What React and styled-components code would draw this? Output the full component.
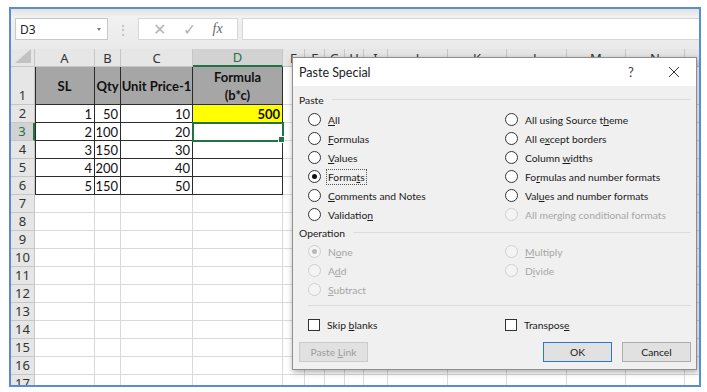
import React from "react";
import styled, { createGlobalStyle } from "styled-components";

const GlobalStyle = createGlobalStyle`
  body {
    margin: 0;
    background: #ffffff;
    font-family: "Lato", "Open Sans", sans-serif;
  }
`;

const colWidths = [24, 60, 26, 72, 90, 22, 20, 20, 19, 24, 60, 59, 60, 59, 59, 40];
const colLetters = ["A", "B", "C", "D", "E", "F", "G", "H", "I", "J", "K", "L", "M", "N", "O"];

const tableRows = [
  ["SL", "Qty", "Unit Price-1", "Formula\n(b*c)"],
  ["1", "50", "10", "500"],
  ["2", "100", "20", ""],
  ["3", "150", "30", ""],
  ["4", "200", "40", ""],
  ["5", "150", "50", ""],
];

const Frame = styled.div`
  position: relative;
  margin: 7px 0 0 9px;
  width: 688px;
  height: 376px;
  border: 2px solid #5b8bd4;
  overflow: hidden;
  background: #ffffff;
`;

const Toolbar = styled.div`
  height: 40px;
  display: flex;
  align-items: flex-start;
  padding: 9px 0 0 4px;
  box-sizing: border-box;
  background: linear-gradient(#e2e2e2, #f1f1f1 20%, #eaeaea);
`;

const NameBox = styled.div`
  width: 93px;
  height: 22px;
  box-sizing: border-box;
  background: #fff;
  border: 1px solid #c8c8c8;
  display: flex;
  align-items: center;
  justify-content: space-between;
  padding: 0 6px 0 4px;
  font-family: "Noto Sans", sans-serif;
  font-size: 12px;
  color: #222;
`;

const Caret = styled.span`
  width: 0;
  height: 0;
  border-left: 2.5px solid transparent;
  border-right: 2.5px solid transparent;
  border-top: 3px solid #777;
`;

const Grip = styled.div`
  width: 30px;
  height: 22px;
  display: flex;
  align-items: center;
  justify-content: center;
  color: #b0b0b0;
  font-size: 12px;
`;

const FxBox = styled.div`
  width: 100px;
  height: 22px;
  box-sizing: border-box;
  background: #fff;
  border: 1px solid #d6d6d6;
  display: flex;
  align-items: center;
  justify-content: space-around;
  padding: 0 6px;
  color: #b4b4b4;
`;

const Fx = styled.span`
  font-family: "Liberation Serif", serif;
  font-style: italic;
  font-size: 14px;
  color: #666;
`;

const FormulaInput = styled.div`
  flex: 1;
  height: 22px;
  margin-left: 4px;
  box-sizing: border-box;
  background: #fff;
  border: 1px solid #d6d6d6;
  border-right: none;
`;

const Sheet = styled.div`
  display: grid;
  grid-template-columns: ${colWidths.map((w) => w + "px").join(" ")};
  grid-template-rows: 18px 38px;
  grid-auto-rows: 18px;
  font-family: "Lato", "Open Sans", sans-serif;
  font-size: 13px;
  color: #111;
  background: #eaeaea;
`;

const Corner = styled.div`
  background: #e6e6e6;
  border-right: 1px solid #c6c6c6;
  border-bottom: 1px solid #c6c6c6;
  position: relative;
  &::after {
    content: "";
    position: absolute;
    right: 3px;
    bottom: 3px;
    border-left: 16px solid transparent;
    border-bottom: 14px solid #c2c2c2;
  }
`;

const ColHead = styled.div`
  background: ${(p) => (p.$active ? "#d2d2d2" : "#e6e6e6")};
  color: ${(p) => (p.$active ? "#217346" : "#333")};
  border-right: 1px solid #c6c6c6;
  border-bottom: ${(p) => (p.$active ? "2px solid #217346" : "1px solid #c6c6c6")};
  display: flex;
  align-items: center;
  justify-content: center;
  font-family: "Noto Sans", sans-serif;
  font-size: 13px;
  overflow: hidden;
`;

const RowHead = styled.div`
  background: ${(p) => (p.$active ? "#d2d2d2" : "#e6e6e6")};
  color: ${(p) => (p.$active ? "#217346" : "#333")};
  border-right: ${(p) => (p.$active ? "2px solid #217346" : "1px solid #c6c6c6")};
  border-bottom: 1px solid #c6c6c6;
  display: flex;
  align-items: ${(p) => (p.$tall ? "flex-end" : "center")};
  justify-content: center;
  font-family: "Noto Sans", sans-serif;
  font-size: 13px;
  line-height: 17px;
`;

const Cell = styled.div`
  position: relative;
  background: ${(p) => p.$bg || "#ffffff"};
  border-right: 1px solid ${(p) => (p.$table ? "#2b2b2b" : "#dadada")};
  border-bottom: 1px solid ${(p) => (p.$table ? "#2b2b2b" : "#dadada")};
  box-shadow: ${(p) => (p.$left ? "inset 1px 0 0 #2b2b2b" : "none")};
  display: flex;
  align-items: center;
  justify-content: ${(p) => (p.$center ? "center" : "flex-end")};
  text-align: center;
  padding: 0 2px;
  font-weight: ${(p) => (p.$bold ? 700 : 400)};
  white-space: pre;
  line-height: 18px;
  ${(p) =>
    p.$selected &&
    `
    outline: 2px solid #217346;
    outline-offset: -1px;
    z-index: 1;
    &::after {
      content: "";
      position: absolute;
      right: -3px;
      bottom: -3px;
      width: 5px;
      height: 5px;
      background: #217346;
      border: 1px solid #fff;
    }
  `}
`;

const Dialog = styled.div`
  position: absolute;
  left: 281px;
  top: 48px;
  width: 405px;
  height: 313px;
  box-sizing: border-box;
  border: 1px solid #8f8f8f;
  background: #f0f0f0;
  box-shadow: 1px 2px 6px rgba(0, 0, 0, 0.35);
  font-family: "Lato", "Open Sans", sans-serif;
  font-size: 10.3px;
  color: #1a1a1a;
  display: flex;
  flex-direction: column;
`;

const TitleBar = styled.div`
  height: 28px;
  background: #fff;
  display: flex;
  align-items: center;
  padding: 0 0 0 6px;
  font-size: 12.5px;
  color: #222;
`;

const Title = styled.div`
  flex: 1;
`;

const TitleButton = styled.div`
  width: ${(p) => p.$w}px;
  margin-left: ${(p) => p.$ml || 0}px;
  display: flex;
  justify-content: center;
  color: #444;
  font-size: 13px;
`;

const Body = styled.div`
  flex: 1;
  padding: 5px 5px 0 6px;
  display: flex;
  flex-direction: column;
`;

const GroupLabel = styled.div`
  display: flex;
  align-items: center;
  height: 18px;
  color: #1a1a1a;
  &::after {
    content: "";
    flex: 1;
    height: 1px;
    background: #dcdcdc;
    margin-left: 8px;
    margin-top: -2px;
  }
`;

const Options = styled.div`
  display: grid;
  grid-template-columns: 197px 1fr;
  grid-auto-rows: 19px;
  padding-left: 9px;
  margin-top: ${(p) => p.$mt || 0}px;
`;

const Option = styled.div`
  display: flex;
  align-items: center;
  gap: 5px;
  color: ${(p) => (p.$disabled ? "#a6a6a6" : "#1a1a1a")};
`;

const Radio = styled.span`
  width: 13px;
  height: 13px;
  box-sizing: border-box;
  border-radius: 50%;
  border: 1px solid ${(p) => (p.$disabled ? "#cfcfcf" : "#333")};
  background: ${(p) => (p.$disabled ? "#f4f4f4" : "#fff")};
  display: flex;
  align-items: center;
  justify-content: center;
  flex-shrink: 0;
  &::after {
    content: "";
    display: ${(p) => (p.$checked ? "block" : "none")};
    width: 5px;
    height: 5px;
    border-radius: 50%;
    background: ${(p) => (p.$disabled ? "#b8b8b8" : "#111")};
  }
`;

const Check = styled.span`
  width: 12px;
  height: 12px;
  box-sizing: border-box;
  border: 1px solid #333;
  background: #fff;
  flex-shrink: 0;
`;

const Label = styled.span`
  padding: 0 1px;
  border: 1px ${(p) => (p.$focus ? "dotted #555" : "solid transparent")};
  line-height: 14px;
`;

const Divider = styled.div`
  height: 1px;
  background: #dcdcdc;
  margin: 6px 0 0 9px;
`;

const Footer = styled.div`
  display: flex;
  align-items: center;
  margin-top: 8px;
`;

const Button = styled.div`
  width: ${(p) => p.$w || 69}px;
  height: 20px;
  box-sizing: border-box;
  display: flex;
  align-items: center;
  justify-content: center;
  background: #e1e1e1;
  border: 1px solid ${(p) => (p.$primary ? "#2a78d4" : p.$disabled ? "#cccccc" : "#adadad")};
  color: ${(p) => (p.$disabled ? "#9c9c9c" : "#1a1a1a")};
  margin-left: ${(p) => p.$ml || 0}px;
`;

const Spacer = styled.div`
  flex: 1;
`;

const u = (text, i) => (
  <span>
    {text.slice(0, i)}
    <u>{text[i]}</u>
    {text.slice(i + 1)}
  </span>
);

const pasteOptions = [
  { t: "All", k: 0 },
  { t: "All using Source theme", k: 18 },
  { t: "Formulas", k: 0 },
  { t: "All except borders", k: 5 },
  { t: "Values", k: 0 },
  { t: "Column widths", k: 7 },
  { t: "Formats", k: 5, checked: true, focus: true },
  { t: "Formulas and number formats", k: 2 },
  { t: "Comments and Notes", k: 0 },
  { t: "Values and number formats", k: 3 },
  { t: "Validation", k: 9 },
  { t: "All merging conditional formats", k: -1, disabled: true },
];

const opOptions = [
  { t: "None", k: 1, checked: true },
  { t: "Multiply", k: 0 },
  { t: "Add", k: 1 },
  { t: "Divide", k: 1 },
  { t: "Subtract", k: 0 },
];

const CloseIcon = () => (
  <svg width="12" height="12" viewBox="0 0 12 12">
    <path d="M1 1 L11 11 M11 1 L1 11" stroke="#333" strokeWidth="1" fill="none" />
  </svg>
);

function SheetGrid() {
  const cells = [];
  cells.push(<Corner key="corner" />);
  colLetters.forEach((l) => cells.push(<ColHead key={"h" + l} $active={l === "D"}>{l}</ColHead>));
  for (let r = 1; r <= 17; r++) {
    cells.push(
      <RowHead key={"r" + r} $active={r === 3} $tall={r === 1}>
        {r}
      </RowHead>
    );
    colLetters.forEach((l, c) => {
      const inTable = r <= 6 && c <= 3;
      const value = inTable ? tableRows[r - 1][c] : "";
      cells.push(
        <Cell
          key={l + r}
          $table={inTable}
          $left={inTable && c === 0}
          $bg={r === 1 && inTable ? "#a6a6a6" : r === 2 && c === 3 ? "#ffff00" : null}
          $bold={r === 1 || (r === 2 && c === 3)}
          $center={r === 1}
          $selected={r === 3 && c === 3}
        >
          {value}
        </Cell>
      );
    });
  }
  return <Sheet>{cells}</Sheet>;
}

function PasteSpecial() {
  return (
    <Dialog>
      <TitleBar>
        <Title>Paste Special</Title>
        <TitleButton $w={24}>?</TitleButton>
        <TitleButton $w={44} $ml={9}>
          <CloseIcon />
        </TitleButton>
      </TitleBar>
      <Body>
        <GroupLabel>Paste</GroupLabel>
        <Options $mt={1}>
          {pasteOptions.map((o) => (
            <Option key={o.t} $disabled={o.disabled}>
              <Radio $checked={o.checked} $disabled={o.disabled} />
              <Label $focus={o.focus}>{o.k >= 0 ? u(o.t, o.k) : o.t}</Label>
            </Option>
          ))}
        </Options>
        <GroupLabel>Operation</GroupLabel>
        <Options>
          {opOptions.map((o) => (
            <Option key={o.t} $disabled>
              <Radio $checked={o.checked} $disabled />
              <Label>{u(o.t, o.k)}</Label>
            </Option>
          ))}
        </Options>
        <Divider />
        <Options $mt={9}>
          <Option>
            <Check />
            <Label>{u("Skip blanks", 5)}</Label>
          </Option>
          <Option>
            <Check />
            <Label>{u("Transpose", 8)}</Label>
          </Option>
        </Options>
        <Footer>
          <Button $disabled>{u("Paste Link", 6)}</Button>
          <Spacer />
          <Button $primary>OK</Button>
          <Button $ml={10}>Cancel</Button>
        </Footer>
      </Body>
    </Dialog>
  );
}

export default function App() {
  return (
    <>
      <GlobalStyle />
      <Frame>
        <Toolbar>
          <NameBox>
            D3
            <Caret />
          </NameBox>
          <Grip>⋮</Grip>
          <FxBox>
            <span>✕</span>
            <span>✓</span>
            <Fx>fx</Fx>
          </FxBox>
          <FormulaInput />
        </Toolbar>
        <SheetGrid />
        <PasteSpecial />
      </Frame>
    </>
  );
}
